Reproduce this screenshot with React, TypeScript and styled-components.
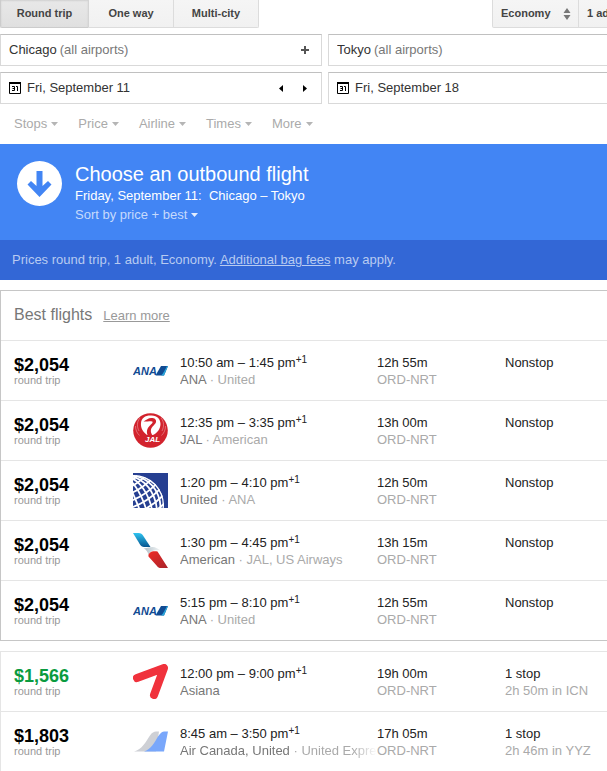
import React from "react";
import styled, { createGlobalStyle, css } from "styled-components";

const GlobalStyle = createGlobalStyle`
  * { box-sizing: border-box; }
  body {
    margin: 0;
    background: #fff;
    color: #222;
    font: 13px/17px "Liberation Sans", Arial, sans-serif;
    overflow-x: hidden;
  }
  button, input, select { font: inherit; color: inherit; margin: 0; }
  h1, h2, p { margin: 0; font-weight: normal; }
`;

const TopBar = styled.header`
  display: flex;
  justify-content: space-between;
  height: 28px;
`;

const Group = styled.div`
  display: flex;
`;

const raised = css`
  height: 28px;
  border: 1px solid #dcdcdc;
  border-top: 0;
  background: linear-gradient(#f5f5f5, #f1f1f1);
  color: #444;
  font-size: 11px;
  font-weight: bold;
`;

const TripTab = styled.button<{ $active?: boolean }>`
  ${raised}
  width: 85px;
  padding: 0;
  border-left-width: 0;

  &:first-child {
    width: 89px;
    border-left-width: 1px;
    border-bottom-left-radius: 2px;
  }
  &:last-child {
    border-bottom-right-radius: 2px;
  }
  ${(p) =>
    p.$active &&
    css`
      background: linear-gradient(#e8e8e8, #e0e0e0);
      box-shadow: inset 0 1px 2px rgba(0, 0, 0, 0.1);
      border-color: #ccc #d4d4d4 #ccc #ccc;
    `}
`;

const SelectBox = styled.div`
  ${raised}
  display: flex;
  align-items: center;
  width: 87px;
  padding: 0 7px 0 8px;
  border-bottom-left-radius: 2px;

  select {
    flex: 1;
    min-width: 0;
    padding: 0;
    border: 0;
    background: none;
    appearance: none;
  }
`;

const Travelers = styled.button`
  ${raised}
  width: 28px;
  padding: 0 0 0 8px;
  border-width: 0 0 1px;
  overflow: hidden;
  white-space: nowrap;
  text-align: left;
`;

const SearchForm = styled.form`
  display: grid;
  grid-template-columns: 322px minmax(0, 1fr);
  gap: 6px;
  margin-top: 6px;
`;

const Field = styled.div<{ $open?: boolean }>`
  display: flex;
  align-items: center;
  height: 32px;
  padding: 0 8px;
  border: 1px solid #d9d9d9;
  border-top-color: #c0c0c0;
  border-right-width: ${(p) => (p.$open ? 0 : 1)}px;

  label {
    display: flex;
    align-items: center;
    flex: 1;
    min-width: 0;
  }
`;

const TextBox = styled.input`
  field-sizing: content;
  padding: 0 0 2px;
  border: 0;
  outline: 0;
  background: none;
  color: #333;
`;

const Hint = styled.span`
  margin-left: 3px;
  padding-bottom: 2px;
  color: #777;
`;

const CalendarSvg = styled.svg`
  flex: none;
  margin-right: 6px;
`;

const IconButton = styled.button`
  display: flex;
  align-items: center;
  justify-content: center;
  width: 16px;
  height: 16px;
  padding: 0;
  border: 0;
  background: none;

  & + & {
    margin-left: 8px;
  }
`;

const Filters = styled.nav`
  display: flex;
  gap: 20px;
  padding: 11px 14px 12px;
`;

const MenuButton = styled.button<{ $tone: string }>`
  display: flex;
  align-items: center;
  gap: 4px;
  padding: 0;
  border: 0;
  background: none;
  color: ${(p) => p.$tone};
  line-height: 17px;
`;

const Banner = styled.section`
  display: flex;
  gap: 13px;
  height: 96px;
  padding: 17px;
  background: #4285f4;
  color: #fff;

  h1 {
    font-size: 20px;
    line-height: 26px;
    white-space: pre;
  }
  p {
    margin-bottom: 1px;
    line-height: 18px;
    white-space: pre;
  }
`;

const Notice = styled.p`
  padding: 11px 12px 12px;
  background: #3367d6;
  color: #b8cbf1;

  a {
    color: inherit;
  }
`;

const Card = styled.section<{ $best?: boolean }>`
  margin-top: 10px;
  border: solid ${(p) => (p.$best ? "#c6c6c6" : "#e5e5e5")};
  border-width: ${(p) => (p.$best ? "1px 0 1px 1px" : "0 0 0 1px")};
`;

const CardHeader = styled.header`
  display: flex;
  align-items: baseline;
  gap: 11px;
  height: 49px;
  padding: 14px 13px 0;
  color: #777;

  h2 {
    font-size: 16px;
    line-height: 20px;
  }
  a {
    color: #999;
  }
`;

const Table = styled.table`
  width: 100%;
  table-layout: fixed;
  border-collapse: separate;
  border-spacing: 0;
`;

const Cell = styled.td`
  height: 60px;
  padding: 13px 0 0;
  border-top: 1px solid #e5e5e5;
  vertical-align: top;
  white-space: nowrap;
  overflow: hidden;
`;

const PriceCell = styled(Cell)`
  padding-left: 13px;
`;

const LogoCell = styled(Cell)`
  padding-top: 12px;

  svg {
    display: block;
  }
`;

const Price = styled.div<{ $low?: boolean }>`
  padding-top: 2px;
  color: ${(p) => (p.$low ? "#0b9b3f" : "#000")};
  font-size: 18px;
  font-weight: bold;
  line-height: 18px;
`;

const Small = styled.div`
  color: #999;
  font-size: 11px;
  line-height: 12px;
`;

const Muted = styled.div`
  color: #aaa;
`;

const Carriers = styled.div<{ $fade?: boolean }>`
  color: #aaa;
  overflow: hidden;
  ${(p) => p.$fade && css`mask-image: linear-gradient(to left, transparent, #000 24px);`}

  b {
    color: #777;
    font-weight: normal;
  }
`;

const DayShift = styled.sup`
  font-size: 10px;
  line-height: 0;
  vertical-align: 4px;
`;

const Caret = ({ color }: { color: string }) => (
  <svg width="7" height="4" viewBox="0 0 7 4" aria-hidden="true">
    <path d="M0 0h7L3.5 4z" fill={color} />
  </svg>
);

const Calendar = () => (
  <CalendarSvg width="12" height="12" viewBox="0 0 12 12" fill="none" aria-hidden="true">
    <path d="M.5 1v10.500h11V1z" stroke="#000" />
    <path d="M0 0h12v2H0z" fill="#000" />
    <path d="M3 4.500h2.500v4H3M3.500 6.500h2M7 4.500h1.500V9" stroke="#000" />
  </CalendarSvg>
);

const Ana = () => (
  <svg width="35" height="35" viewBox="0 0 35 35" role="img" aria-label="ANA logo">
    <text
      x="0"
      y="22"
      fill="#124a92"
      fontFamily="Liberation Sans, Arial, sans-serif"
      fontSize="11"
      fontWeight="bold"
      fontStyle="italic"
    >
      ANA
    </text>
    <path d="M28 13h7l-4 9.500h-8.500z" fill="#114b93" />
    <path d="M34 13h1l-4 9.500h-3c2.500-2 4-6 6-9.500z" fill="#2aa7dc" />
  </svg>
);

const Jal = () => (
  <svg width="35" height="35" viewBox="0 0 35 35" role="img" aria-label="JAL logo">
    <circle cx="17.500" cy="17.500" r="17.300" fill="#d2232d" />
    <path d="M17.500 2.500C24 2 27.500 6 27.500 11S24 20 20 22h-6C10 19 7.500 15 8 10s4-7.500 9.500-7.500z" fill="#fff" />
    <path
      d="M10.500 8.500c3-1.500 4.500-3.500 8-3.500 3 0 5 1.500 4.500 4-.5 2.500-4 4-5 7.500-.5 2 0 4 2 6.500h-5c-2-4-1-7.500 1.500-10 2-2 3.500-3 3-4.200-.5-1.300-4-.3-9-.3z"
      fill="#d2232d"
    />
    <path d="M7 5C3.500 9 4 14 6 18M28 5c3.500 4 3 9 1 13M2.500 13c0 4 1.500 7 4 9.500M32.500 13c0 4-1.500 7-4 9.500" fill="none" stroke="#fff" strokeOpacity=".55" strokeWidth=".6" />
    <text
      x="12"
      y="29"
      fill="#fff"
      fontFamily="Liberation Sans, Arial, sans-serif"
      fontSize="8"
      fontWeight="bold"
      fontStyle="italic"
    >
      JAL
    </text>
  </svg>
);

const United = () => (
  <svg width="35" height="35" viewBox="0 0 35 35" role="img" aria-label="United logo">
    <defs>
      <clipPath id="globe">
        <circle cx="1" cy="32" r="30" />
      </clipPath>
    </defs>
    <path d="M0 0h35v35H0z" fill="#263f91" />
    <g clipPath="url(#globe)">
      <g transform="translate(1 32) rotate(-22)" fill="none" stroke="#fff" strokeWidth="1.800">
        <ellipse rx="29.500" ry="29.500" />
        <ellipse rx="26" ry="29.500" />
        <ellipse rx="21.500" ry="29.500" />
        <ellipse rx="16" ry="29.500" />
        <ellipse rx="10" ry="29.500" />
        <ellipse rx="3.500" ry="29.500" />
        <path d="M-14-26q14 6 28 0M-20-22q20 8 40 0M-25-17q25 10 50 0M-28-11q28 12 56 0M-30-5q30 13 60 0M-31 2q31 13 62 0M-31 9q31 13 62 0" />
      </g>
    </g>
  </svg>
);

const American = () => (
  <svg width="35" height="35" viewBox="0 0 35 35" role="img" aria-label="American logo">
    <defs>
      <linearGradient id="aaBlue" x2="0" y2="1">
        <stop stopColor="#2ec4f1" />
        <stop offset="1" stopColor="#07558f" />
      </linearGradient>
      <linearGradient id="aaRed" x2="1" y2="1">
        <stop stopColor="#ef2a25" />
        <stop offset="1" stopColor="#a8242b" />
      </linearGradient>
      <linearGradient id="aaGrey">
        <stop stopColor="#aebbc3" />
        <stop offset=".6" stopColor="#d9e0e4" />
        <stop offset="1" stopColor="#f3f5f6" />
      </linearGradient>
    </defs>
    <path d="M0 0h5.500c2.500 0 3.500 1 4.500 2.500L17.500 14H11c-2 0-3-1-4-2.500z" fill="url(#aaBlue)" />
    <path d="M10.500 15c3 .8 5-1 9-1 3 0 6 2 8 3.500-6-.5-10 0-12 4.500-.5-3-2-5-5-7z" fill="url(#aaGrey)" />
    <path d="M15.500 23.500C15 19.500 19 17.500 24.500 18.500L35 35h-7c-2 0-3-.5-4-2z" fill="url(#aaRed)" />
  </svg>
);

const Asiana = () => (
  <svg width="35" height="35" viewBox="0 0 35 35" role="img" aria-label="Asiana logo">
    <path
      d="M4 14L31 4 21 31"
      fill="none"
      stroke="#f0323c"
      strokeWidth="8"
      strokeLinecap="round"
      strokeLinejoin="round"
    />
  </svg>
);

const MixedCarriers = () => (
  <svg width="35" height="35" viewBox="0 0 35 35" role="img" aria-label="Multiple airlines">
    <path d="M1 27.500c8-2 12-10 16-16 2-3 4-4 6-4h3l-3 20z" fill="#ced0d5" />
    <path d="M11 27.500c7-2 11-10 14-15 3-4 4-5 7-5h3l-4 20z" fill="#79a7fb" />
  </svg>
);

type Flight = {
  price: string;
  low?: boolean;
  logo: React.FC;
  time: string;
  main: string;
  partners?: string;
  fade?: boolean;
  duration: string;
  stops: string;
  layover?: string;
};

const bestFlights: Flight[] = [
  { price: "$2,054", logo: Ana, time: "10:50 am – 1:45 pm", main: "ANA", partners: "United", duration: "12h 55m", stops: "Nonstop" },
  { price: "$2,054", logo: Jal, time: "12:35 pm – 3:35 pm", main: "JAL", partners: "American", duration: "13h 00m", stops: "Nonstop" },
  { price: "$2,054", logo: United, time: "1:20 pm – 4:10 pm", main: "United", partners: "ANA", duration: "12h 50m", stops: "Nonstop" },
  { price: "$2,054", logo: American, time: "1:30 pm – 4:45 pm", main: "American", partners: "JAL, US Airways", duration: "13h 15m", stops: "Nonstop" },
  { price: "$2,054", logo: Ana, time: "5:15 pm – 8:10 pm", main: "ANA", partners: "United", duration: "12h 55m", stops: "Nonstop" },
];

const otherFlights: Flight[] = [
  { price: "$1,566", low: true, logo: Asiana, time: "12:00 pm – 9:00 pm", main: "Asiana", duration: "19h 00m", stops: "1 stop", layover: "2h 50m in ICN" },
  { price: "$1,803", logo: MixedCarriers, time: "8:45 am – 3:50 pm", main: "Air Canada, United", partners: "United Express", fade: true, duration: "17h 05m", stops: "1 stop", layover: "2h 46m in YYZ" },
];

const FlightTable = ({ flights, label }: { flights: Flight[]; label: string }) => (
  <Table aria-label={label}>
    <colgroup>
      <col width="132" />
      <col width="47" />
      <col width="197" />
      <col width="128" />
      <col />
    </colgroup>
    <tbody>
      {flights.map((f) => (
        <tr key={f.time}>
          <PriceCell>
            <Price $low={f.low}>{f.price}</Price>
            <Small>round trip</Small>
          </PriceCell>
          <LogoCell>
            <f.logo />
          </LogoCell>
          <Cell>
            <div>
              {f.time}
              <DayShift>+1</DayShift>
            </div>
            <Carriers $fade={f.fade}>
              <b>{f.main}</b>
              {f.partners && ` · ${f.partners}`}
            </Carriers>
          </Cell>
          <Cell>
            <div>{f.duration}</div>
            <Muted>ORD-NRT</Muted>
          </Cell>
          <Cell>
            <div>{f.stops}</div>
            {f.layover && <Muted>{f.layover}</Muted>}
          </Cell>
        </tr>
      ))}
    </tbody>
  </Table>
);

export default function App() {
  return (
    <>
      <GlobalStyle />
      <TopBar>
        <Group>
          <TripTab $active>Round trip</TripTab>
          <TripTab>One way</TripTab>
          <TripTab>Multi-city</TripTab>
        </Group>
        <Group>
          <SelectBox>
            <select aria-label="Cabin">
              <option>Economy</option>
            </select>
            <svg width="8" height="12" viewBox="0 0 8 12" fill="#777" aria-hidden="true">
              <path d="M4 0l3.500 5h-7zM4 12L.5 7h7z" />
            </svg>
          </SelectBox>
          <Travelers>1 adult</Travelers>
        </Group>
      </TopBar>

      <SearchForm>
        <Field>
          <label>
            <TextBox defaultValue="Chicago" aria-label="From" />
            <Hint>(all airports)</Hint>
          </label>
          <IconButton type="button" aria-label="Add airport">
            <svg width="8" height="8" viewBox="0 0 8 8">
              <path d="M3 0h2v3h3v2H5v3H3V5H0V3h3z" fill="#555" />
            </svg>
          </IconButton>
        </Field>
        <Field $open>
          <label>
            <TextBox defaultValue="Tokyo" aria-label="To" />
            <Hint>(all airports)</Hint>
          </label>
        </Field>
        <Field>
          <label>
            <Calendar />
            <TextBox defaultValue="Fri, September 11" aria-label="Departure date" />
          </label>
          <IconButton type="button" aria-label="Earlier">
            <svg width="4" height="7" viewBox="0 0 4 7">
              <path d="M4 0v7L0 3.500z" />
            </svg>
          </IconButton>
          <IconButton type="button" aria-label="Later">
            <svg width="4" height="7" viewBox="0 0 4 7">
              <path d="M0 0v7l4-3.500z" />
            </svg>
          </IconButton>
        </Field>
        <Field $open>
          <label>
            <Calendar />
            <TextBox defaultValue="Fri, September 18" aria-label="Return date" />
          </label>
        </Field>
      </SearchForm>

      <Filters aria-label="Filters">
        {["Stops", "Price", "Airline", "Times", "More"].map((name) => (
          <MenuButton key={name} $tone="#aaa">
            {name}
            <Caret color="#b5b5b5" />
          </MenuButton>
        ))}
      </Filters>

      <Banner>
        <svg width="45" height="45" viewBox="0 0 45 45" aria-hidden="true">
          <circle cx="22.500" cy="22.500" r="22.500" fill="#fff" />
          <path d="M19.500 10h6v15l5.500-5 3.500 3.500-12 12.500-12-12.500L14 20l5.500 5z" fill="#4285f4" />
        </svg>
        <div>
          <h1>Choose an outbound flight</h1>
          <p>{"Friday, September 11:\u00a0 Chicago – Tokyo"}</p>
          <MenuButton $tone="#c6dafc">
            Sort by price + best
            <Caret color="#e3edfd" />
          </MenuButton>
        </div>
      </Banner>
      <Notice>
        Prices round trip, 1 adult, Economy. <a href="#bag-fees">Additional bag fees</a> may apply.
      </Notice>

      <main>
        <Card $best>
          <CardHeader>
            <h2>Best flights</h2>
            <a href="#learn-more">Learn more</a>
          </CardHeader>
          <FlightTable flights={bestFlights} label="Best flights" />
        </Card>
        <Card>
          <FlightTable flights={otherFlights} label="Other flights" />
        </Card>
      </main>
    </>
  );
}
